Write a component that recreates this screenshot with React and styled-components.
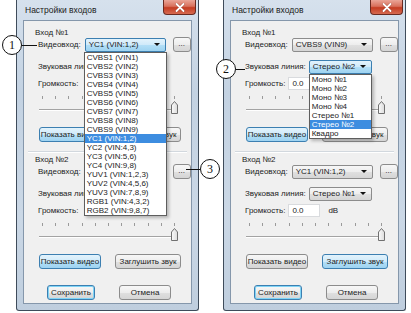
import React from 'react'
import styled, { createGlobalStyle, css } from 'styled-components'

const GlobalStyle = createGlobalStyle`
  html, body { margin:0; padding:0; background:#fff; }
  body { font-family:"Liberation Sans", Arial, sans-serif; color:#1c1c1c; }
`

const videoItems = [
  'CVBS1 (VIN1)', 'CVBS2 (VIN2)', 'CVBS3 (VIN3)', 'CVBS4 (VIN4)', 'CVBS5 (VIN5)',
  'CVBS6 (VIN6)', 'CVBS7 (VIN7)', 'CVBS8 (VIN8)', 'CVBS9 (VIN9)',
  'YC1 (VIN:1,2)', 'YC2 (VIN:4,3)', 'YC3 (VIN:5,6)', 'YC4 (VIN:9,8)',
  'YUV1 (VIN:1,2,3)', 'YUV2 (VIN:4,5,6)', 'YUV3 (VIN:7,8,9)',
  'RGB1 (VIN:4,3,2)', 'RGB2 (VIN:9,8,7)',
]
const audioItems = ['Моно №1', 'Моно №2', 'Моно №3', 'Моно №4', 'Стерео №1', 'Стерео №2', 'Квадро']

const grayFill = css`
  background:linear-gradient(to bottom, #f7f7f7 0%, #ededed 50%, #e0e0e0 51%, #d5d5d5 100%);
  border:1px solid #8c8c8c;
`
const blueFill = css`
  background:linear-gradient(to bottom, #e3f3fc 0%, #cfeafa 50%, #b3dff7 51%, #9ed3f1 100%);
  border:1px solid #3c7fb1;
`
// parts that sit fully under an open drop-down list
const covered = css`
  visibility:${p => (p.$covered ? 'hidden' : 'visible')};
`

const Page = styled.div`
  position:relative;
  width:411px;
  height:313px;
  overflow:hidden;
  box-sizing:border-box;
  padding-left:16px;
  display:flex;
  align-items:flex-start;
  gap:24px;
`

const Window = styled.div`
  width:183px;
  height:311px;
  box-sizing:border-box;
  border:1px solid #3f4c5b;
  border-top:none;
  border-radius:0 0 3px 3px;
  background:linear-gradient(to bottom, #d6e1ed 0%, #c3d2e2 30%, #cbd8e6 70%, #bfcede 100%);
  display:flex;
  flex-direction:column;
`

const TitleBar = styled.div`
  height:20px;
  display:flex;
  align-items:flex-start;
  flex-shrink:0;
`
const Title = styled.div`
  flex:1;
  padding-left:8px;
  line-height:20px;
  font-size:8.5px;
  color:#1a1a1a;
`
const CloseButton = styled.div`
  width:33px;
  height:15px;
  margin-right:2px;
  box-sizing:border-box;
  border:1px solid #6a2a20;
  border-top:none;
  border-radius:0 0 4px 4px;
  background:linear-gradient(to bottom, #eaa597 0%, #d8705c 45%, #c43c22 55%, #d66a50 100%);
  display:flex;
  align-items:center;
  justify-content:center;
`

const Client = styled.div`
  flex:1;
  margin:0 6px 6px;
  border:1px solid #8597ab;
  background:#f0f0f0;
  display:flex;
  flex-direction:column;
`

const Group = styled.div`
  display:flex;
  flex-direction:column;
  padding-top:${p => p.$top}px;
`
const GroupTitle = styled.div`
  height:9px;
  line-height:9px;
  padding-left:11px;
  font-size:8px;
`
const Row = styled.div`
  display:flex;
  align-items:center;
  height:${p => p.$h || 15}px;
  margin-top:${p => p.$mt || 0}px;
  padding-left:14px;
  gap:3px;
  font-size:8px;
`
const Label = styled.span`
  white-space:nowrap;
`
const ComboWrap = styled.div`
  position:relative;
  width:${p => p.$w}px;
  height:14px;
  margin-left:${p => p.$ml || 0}px;
`
const Combo = styled.div`
  box-sizing:border-box;
  height:100%;
  border-radius:2px;
  ${p => (p.$focus ? blueFill : grayFill)}
  display:flex;
  align-items:center;
  padding-left:3px;
  font-size:8px;
  white-space:nowrap;
  ${covered}
`
const Arrow = styled.span`
  margin-left:auto;
  margin-right:5px;
  border-left:3px solid transparent;
  border-right:3px solid transparent;
  border-top:3px solid #111;
`
const DropList = styled.div`
  position:absolute;
  top:100%;
  left:${p => p.$left || 0}px;
  right:${p => p.$right || 0}px;
  z-index:5;
  background:#fff;
  border:1px solid #5e5e5e;
  box-shadow:2px 2px 3px rgba(0,0,0,0.25);
`
const DropItem = styled.div`
  height:9px;
  line-height:9px;
  padding-left:2px;
  font-size:8px;
  white-space:nowrap;
  background:${p => (p.$sel ? '#3d8de0' : 'transparent')};
  color:${p => (p.$sel ? '#fff' : '#1c1c1c')};
`
const DotsButton = styled.div`
  width:18px;
  height:15px;
  box-sizing:border-box;
  margin-left:4px;
  border-radius:3px;
  ${grayFill}
  display:flex;
  align-items:center;
  justify-content:center;
  font-size:8px;
  line-height:8px;
  padding-bottom:2px;
`
const VolumeInput = styled.div`
  width:32px;
  height:13px;
  box-sizing:border-box;
  background:#fff;
  border:1px solid #d9dbde;
  padding-left:3px;
  font-size:8px;
  line-height:11px;
  ${covered}
`
const Unit = styled.span`
  margin-left:5px;
  ${covered}
`

const SliderBox = styled.div`
  position:relative;
  height:22px;
  margin:${p => p.$mt}px 13px 0 15px;
`
const Ticks = styled.div`
  display:flex;
  justify-content:space-between;
  padding:2px 3px 0;
`
const Tick = styled.span`
  width:1px;
  height:3px;
  background:#9a9a9a;
`
const Track = styled.div`
  margin-top:10px;
  height:1px;
  background:#a3a3a3;
  border-bottom:1px solid #fff;
`
const Thumb = styled.svg`
  position:absolute;
  right:0;
  top:7px;
`

const ButtonRow = styled.div`
  display:flex;
  gap:${p => p.$gap}px;
  padding-left:${p => p.$pl}px;
  margin-top:${p => p.$mt}px;
`
const PushButton = styled.div`
  width:${p => p.$w}px;
  height:15px;
  box-sizing:border-box;
  border-radius:3px;
  ${p => (p.$blue ? blueFill : grayFill)}
  ${p => p.$default && css`
    border-color:#3c7fb1;
    box-shadow:inset 0 0 0 1px #7fd4f6;
  `}
  display:flex;
  align-items:center;
  justify-content:center;
  font-size:8px;
  white-space:nowrap;
`
const Separator = styled.div`
  margin:9px 4px 0;
  height:0;
  border-top:1px solid #d2d8de;
  border-bottom:1px solid #fff;
`

const CalloutCircle = styled.div`
  position:absolute;
  left:${p => p.$x}px;
  top:${p => p.$y}px;
  width:20px;
  height:20px;
  box-sizing:border-box;
  border:1px solid #111;
  border-radius:50%;
  background:#fff;
  display:flex;
  align-items:center;
  justify-content:center;
  font-family:"Liberation Serif", "Times New Roman", serif;
  font-size:12px;
  color:#111;
  z-index:10;
`
const CalloutLine = styled.div`
  position:absolute;
  left:${p => p.$x}px;
  top:${p => p.$y}px;
  width:${p => p.$w}px;
  height:1px;
  background:#111;
  z-index:10;
`

function Slider({ mt }) {
  return (
    <SliderBox $mt={mt}>
      <Ticks>
        {Array.from({ length: 11 }).map((_, i) => <Tick key={i} />)}
      </Ticks>
      <Track />
      <Thumb width="7" height="13" viewBox="0 0 7 13">
        <defs>
          <linearGradient id="thumbg" x1="0" x2="1" y1="0" y2="0">
            <stop offset="0" stopColor="#fbfbfb" />
            <stop offset="1" stopColor="#dcdcdc" />
          </linearGradient>
        </defs>
        <polygon points="0.5,4 3.5,0.5 6.5,4 6.5,12.5 0.5,12.5" fill="url(#thumbg)" stroke="#707070" strokeWidth="1" />
      </Thumb>
    </SliderBox>
  )
}

function InputGroup({ title, top, video, videoFocus, videoList, sound, soundFocus, soundList, showBlue, muteBlue, hide = {} }) {
  return (
    <Group $top={top}>
      <GroupTitle>{title}</GroupTitle>
      <Row>
        <Label>Видеовход:</Label>
        <ComboWrap $w={81} $ml={1}>
          <Combo $focus={videoFocus} $covered={hide.video}>{video}<Arrow /></Combo>
          {videoList && (
            <DropList $left={-1} $right={-1}>
              {videoList.map(v => <DropItem key={v} $sel={v === video}>{v}</DropItem>)}
            </DropList>
          )}
        </ComboWrap>
        <DotsButton>...</DotsButton>
      </Row>
      <Row $mt={7}>
        <Label>Звуковая линия:</Label>
        <ComboWrap $w={63}>
          <Combo $focus={soundFocus} $covered={hide.sound}>{sound}<Arrow /></Combo>
          {soundList && (
            <DropList>
              {soundList.map(v => <DropItem key={v} $sel={v === sound}>{v}</DropItem>)}
            </DropList>
          )}
        </ComboWrap>
      </Row>
      <Row $mt={2} $h={14}>
        <Label>Громкость:</Label>
        <VolumeInput $covered={hide.volume}>0.0</VolumeInput>
        <Unit $covered={hide.unit}>dB</Unit>
      </Row>
      <Slider mt={4} />
      <ButtonRow $mt={11} $pl={15} $gap={14}>
        <PushButton $w={62} $blue={showBlue}>Показать видео</PushButton>
        <PushButton $w={66} $blue={muteBlue}>Заглушить звук</PushButton>
      </ButtonRow>
    </Group>
  )
}

function SettingsWindow({ first, second }) {
  return (
    <Window>
      <TitleBar>
        <Title>Настройки входов</Title>
        <CloseButton>
          <svg width="10" height="9" viewBox="0 0 10 9">
            <path d="M1.5 1 L8.5 8 M8.5 1 L1.5 8" stroke="#5a1a10" strokeWidth="3" strokeLinecap="round" opacity="0.35" />
            <path d="M1.5 1 L8.5 8 M8.5 1 L1.5 8" stroke="#fff" strokeWidth="1.8" strokeLinecap="round" />
          </svg>
        </CloseButton>
      </TitleBar>
      <Client>
        <InputGroup title="Вход №1" top={7} {...first} />
        <Separator />
        <InputGroup title="Вход №2" top={2} {...second} />
        <ButtonRow $mt={16} $pl={23} $gap={24}>
          <PushButton $w={48} $default>Сохранить</PushButton>
          <PushButton $w={52}>Отмена</PushButton>
        </ButtonRow>
      </Client>
    </Window>
  )
}

export default function App() {
  return (
    <>
      <GlobalStyle />
      <Page>
        <SettingsWindow
          first={{
            video: 'YC1 (VIN:1,2)', videoFocus: true, videoList: videoItems, sound: 'Стерео №1', showBlue: true,
            hide: { sound: true, volume: true, unit: true },
          }}
          second={{
            video: 'YC1 (VIN:1,2)', sound: 'Стерео №1', showBlue: true,
            hide: { video: true, sound: true, volume: true, unit: true },
          }}
        />
        <SettingsWindow
          first={{
            video: 'CVBS9 (VIN9)', sound: 'Стерео №2', soundFocus: true, soundList: audioItems, showBlue: true,
            hide: { unit: true },
          }}
          second={{ video: 'YC1 (VIN:1,2)', sound: 'Стерео №1', muteBlue: true }}
        />
        <CalloutCircle $x={2} $y={35}>1</CalloutCircle>
        <CalloutLine $x={22} $y={45} $w={15} />
        <CalloutCircle $x={216} $y={59}>2</CalloutCircle>
        <CalloutLine $x={236} $y={69} $w={9} />
        <CalloutCircle $x={200} $y={159}>3</CalloutCircle>
        <CalloutLine $x={186} $y={169} $w={14} />
      </Page>
    </>
  )
}
